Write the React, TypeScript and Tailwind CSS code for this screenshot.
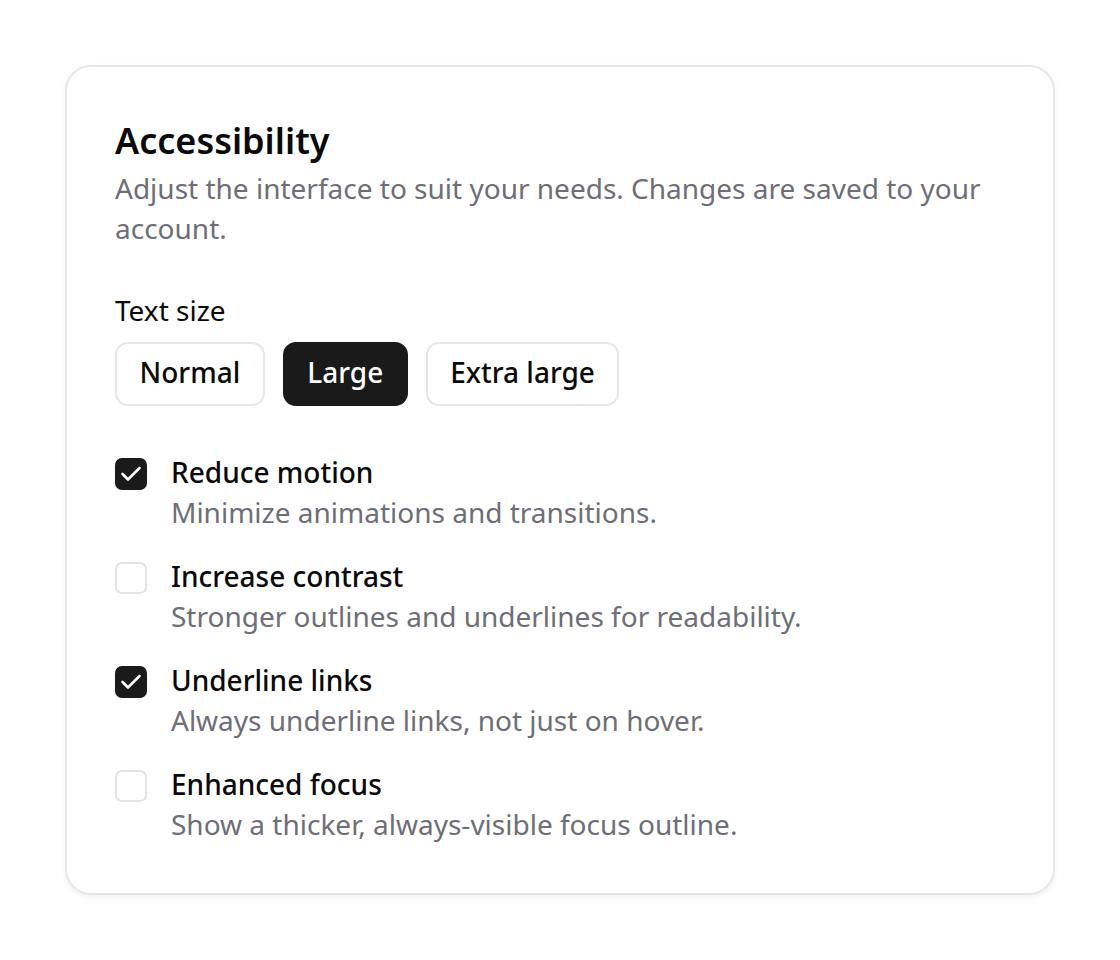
import React, { useState } from 'react';

type Option = {
  id: string;
  label: string;
  hint: string;
};

const sizes = ['Normal', 'Large', 'Extra large'];

const options: Option[] = [
  { id: 'motion', label: 'Reduce motion', hint: 'Minimize animations and transitions.' },
  { id: 'contrast', label: 'Increase contrast', hint: 'Stronger outlines and underlines for readability.' },
  { id: 'links', label: 'Underline links', hint: 'Always underline links, not just on hover.' },
  { id: 'focus', label: 'Enhanced focus', hint: 'Show a thicker, always-visible focus outline.' },
];

function CheckBox({ checked }: { checked: boolean }) {
  return (
    <span
      className={
        checked
          ? 'mt-[6px] flex h-[32px] w-[32px] shrink-0 items-center justify-center rounded-[7px] bg-[#1a1a1b]'
          : 'mt-[6px] flex h-[32px] w-[32px] shrink-0 items-center justify-center rounded-[7px] border-2 border-[#e3e3e5] bg-white'
      }
    >
      {checked && (
        <svg width="32" height="32" viewBox="0 0 32 32" fill="none">
          <polyline
            points="7.5,16 13,21.5 24.5,10"
            stroke="white"
            strokeWidth="2.6"
            strokeLinecap="round"
            strokeLinejoin="round"
          />
        </svg>
      )}
    </span>
  );
}

function App() {
  const [size, setSize] = useState('Large');
  const [checked, setChecked] = useState<Record<string, boolean>>({
    motion: true,
    contrast: false,
    links: true,
    focus: false,
  });

  const toggle = (id: string) => {
    setChecked({ ...checked, [id]: !checked[id] });
  };

  return (
    <div className="min-h-screen bg-white px-[65px] pt-[65px] font-['Noto_Sans',sans-serif]">
      <div className="rounded-[26px] border-2 border-[#e6e6e8] bg-white px-[48px] pb-[49px] pt-[54px] shadow-[0_2px_6px_rgba(0,0,0,0.06)]">
        <h1 className="text-[36px] font-semibold leading-[40px] text-[#0a0a0a]">Accessibility</h1>
        <p className="mt-[7px] text-[28px] leading-[40px] text-[#6e6e76]">
          Adjust the interface to suit your needs. Changes are saved to your account.
        </p>

        <div className="mt-[42px] text-[28px] leading-[40px] text-[#0a0a0a]">Text size</div>
        <div className="mt-[12px] flex gap-[18px]">
          {sizes.map((s) => (
            <button
              key={s}
              type="button"
              onClick={() => setSize(s)}
              className={
                s === size
                  ? 'h-[64px] rounded-[13px] border-2 border-[#1a1a1b] bg-[#1a1a1b] px-[22.5px] pb-[4px] text-[28px] font-medium text-white'
                  : 'h-[64px] rounded-[13px] border-2 border-[#e6e6e8] bg-white px-[22.5px] pb-[4px] text-[28px] font-medium text-[#0a0a0a]'
              }
            >
              {s}
            </button>
          ))}
        </div>

        <div className="mt-[46px] flex flex-col gap-[24px]">
          {options.map((o) => (
            <label key={o.id} className="flex cursor-pointer gap-[24px]" onClick={() => toggle(o.id)}>
              <CheckBox checked={checked[o.id]} />
              <div>
                <div className="text-[28px] font-medium leading-[40px] text-[#0a0a0a]">{o.label}</div>
                <div className="text-[28px] leading-[40px] text-[#6e6e76]">{o.hint}</div>
              </div>
            </label>
          ))}
        </div>
      </div>
    </div>
  );
}

export default App;
